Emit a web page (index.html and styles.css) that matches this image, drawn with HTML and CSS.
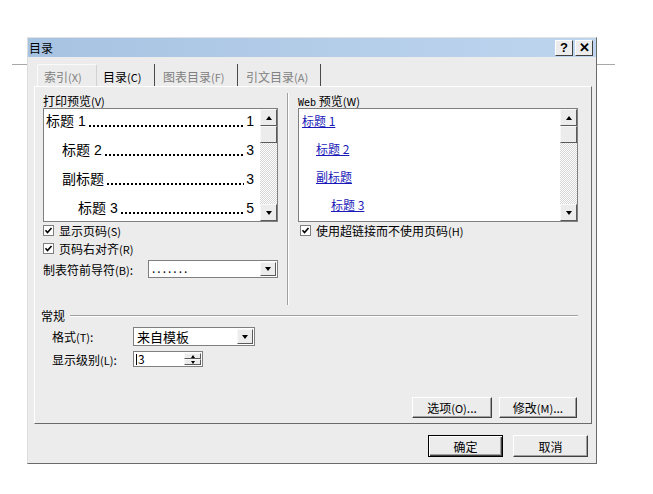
FILE: index.html
```html
<!DOCTYPE html>
<html lang="zh-CN">
<head>
  <meta charset="UTF-8">
  <title>目录</title>
  <link rel="stylesheet" href="styles.css">
</head>
<body>
  <div class="backline"></div>

  <div class="dialog">
    <div class="titlebar">
      <span class="title">目录</span>
      <div class="title-btns">
        <span class="tbtn">?</span>
        <span class="tbtn">✕</span>
      </div>
    </div>

    <div class="tabs">
      <div class="tab first">索引<span class="key">(X)</span></div>
      <div class="tab active">目录<span class="key">(C)</span></div>
      <div class="tab wide">图表目录<span class="key">(F)</span></div>
      <div class="tab wide">引文目录<span class="key">(A)</span></div>
    </div>

    <div class="panel">
      <div class="top">
        <div class="col">
          <div class="label">打印预览<span class="key">(V)</span></div>
          <div class="listbox">
            <div class="list-body toc">
              <div class="toc-row lvl1"><span>标题 1</span><span class="dots"></span><span>1</span></div>
              <div class="toc-row lvl2"><span>标题 2</span><span class="dots"></span><span>3</span></div>
              <div class="toc-row lvl2"><span>副标题</span><span class="dots"></span><span>3</span></div>
              <div class="toc-row lvl3"><span>标题 3</span><span class="dots"></span><span>5</span></div>
            </div>
            <div class="scroll">
              <div class="sbtn"><i class="tri up"></i></div>
              <div class="sbtn"></div>
              <div class="sb-fill"></div>
              <div class="sbtn"><i class="tri"></i></div>
            </div>
          </div>
          <div class="check-row first">
            <svg class="check" viewBox="0 0 11 11"><rect x="0.5" y="0.5" width="10" height="10" fill="#fff" stroke="#808080"/><path d="M2.5 5.3 L4.5 7.5 L8.5 3" stroke="#000" stroke-width="1.6" fill="none"/></svg>
            <span>显示页码<span class="key">(S)</span></span>
          </div>
          <div class="check-row">
            <svg class="check" viewBox="0 0 11 11"><rect x="0.5" y="0.5" width="10" height="10" fill="#fff" stroke="#808080"/><path d="M2.5 5.3 L4.5 7.5 L8.5 3" stroke="#000" stroke-width="1.6" fill="none"/></svg>
            <span>页码右对齐<span class="key">(R)</span></span>
          </div>
          <div class="leader-row">
            <span>制表符前导符<span class="key">(B)</span>:</span>
            <div class="select leader">
              <span class="select-val dotted">.......</span>
              <span class="drop"><i class="tri"></i></span>
            </div>
          </div>
        </div>

        <div class="divider"></div>

        <div class="col">
          <div class="label"><span class="latin">Web</span> 预览<span class="key">(W)</span></div>
          <div class="listbox">
            <div class="list-body links">
              <div class="link-row lvl1"><a>标题 1</a></div>
              <div class="link-row lvl2"><a>标题 2</a></div>
              <div class="link-row lvl2"><a>副标题</a></div>
              <div class="link-row lvl3"><a>标题 3</a></div>
            </div>
            <div class="scroll">
              <div class="sbtn"><i class="tri up"></i></div>
              <div class="sbtn"></div>
              <div class="sb-fill"></div>
              <div class="sbtn"><i class="tri"></i></div>
            </div>
          </div>
          <div class="check-row first right">
            <svg class="check" viewBox="0 0 11 11"><rect x="0.5" y="0.5" width="10" height="10" fill="#fff" stroke="#808080"/><path d="M2.5 5.3 L4.5 7.5 L8.5 3" stroke="#000" stroke-width="1.6" fill="none"/></svg>
            <span>使用超链接而不使用页码<span class="key">(H)</span></span>
          </div>
        </div>
      </div>

      <div class="group-head">
        <span>常规</span>
        <span class="group-line"></span>
      </div>
      <div class="form-row format">
        <span class="form-label">格式<span class="key">(T)</span>:</span>
        <div class="select fmt">
          <span class="select-val">来自模板</span>
          <span class="drop"><i class="tri"></i></span>
        </div>
      </div>
      <div class="form-row level">
        <span class="form-label">显示级别<span class="key">(L)</span>:</span>
        <div class="spin">
          <span class="spin-val"><span class="caret"></span>3</span>
          <span class="spin-btns">
            <span class="spin-btn"><i class="tri tiny up"></i></span>
            <span class="spin-btn"><i class="tri tiny"></i></span>
          </span>
        </div>
      </div>

      <div class="btn-row">
        <button class="btn opt">选项<span class="key">(O)</span>...</button>
        <button class="btn mod">修改<span class="key">(M)</span>...</button>
      </div>
    </div>

    <div class="dlg-btns">
      <button class="btn big default">确定</button>
      <button class="btn big">取消</button>
    </div>
  </div>
</body>
</html>
```

FILE: styles.css
```css
* {
  box-sizing: border-box;
}
body {
  margin: 0;
  background: #fff;
  font-family: "Noto Sans CJK SC", "Noto Sans", sans-serif;
  font-size: 12px;
  color: #000;
  position: relative;
  height: 494px;
  overflow: hidden;
}
.backline {
  position: absolute;
  left: 12px;
  top: 64px;
  width: 603px;
  height: 1px;
  background: #a8a8a8;
}
.dialog {
  position: relative;
  margin: 37px 0 0 27px;
  width: 570px;
  height: 427px;
  background: #ececec;
  border: 1px solid;
  border-color: #e2e2e2 #6a6a6a #6a6a6a #dcdcdc;
}
.titlebar {
  height: 19px;
  display: flex;
  align-items: center;
  justify-content: space-between;
  padding: 0 3px 0 1px;
  background: linear-gradient(to right, #a7c3e2, #bed5ee);
}
.title {
  line-height: 19px;
}
.title-btns {
  display: flex;
  gap: 2px;
}
.tbtn {
  width: 18px;
  height: 16px;
  background: #ececec;
  border: 1px solid;
  border-color: #fff #404040 #404040 #fff;
  font: bold 13px "Liberation Sans", sans-serif;
  display: flex;
  align-items: center;
  justify-content: center;
}
.key {
  font-size: 11px;
}
.latin {
  font: 10px "DejaVu Sans Mono", monospace;
}

/* tabs */
.tabs {
  display: flex;
  margin: 7px 0 0 9px;
  height: 22px;
}
.tab {
  height: 22px;
  padding: 4px 0 0 6px;
  line-height: 18px;
  color: #808080;
  width: 83px;
  border-right: 1px solid #4a4a4a;
}
.tab.first {
  width: 60px;
  border: 1px solid #fafafa;
  border-bottom: none;
  border-right-color: #d2d2d2;
  border-radius: 2px 2px 0 0;
  padding-top: 3px;
}
.tab.active {
  width: 58px;
  color: #000;
}
.tab.wide {
  padding-left: 8px;
}

/* main panel */
.panel {
  margin: 0 4px 0 6px;
  height: 338px;
  border: 1px solid;
  border-color: #fff #6a6a6a #6a6a6a #fff;
  padding: 6px 13px 5px 8px;
  display: flex;
  flex-direction: column;
}
.top {
  display: grid;
  grid-template-columns: 235px 20px 280px;
  height: 212px;
}
.divider {
  justify-self: center;
  width: 2px;
  border-left: 1px solid #a0a0a0;
  border-right: 1px solid #fff;
}
.col {
  padding-top: 1px;
  display: flex;
  flex-direction: column;
}
.label {
  height: 14px;
  line-height: 13px;
}
.listbox {
  height: 114px;
  border: 1px solid #7f7f7f;
  background: #fff;
  display: flex;
}
.list-body {
  flex: 1;
  overflow: hidden;
  min-width: 0;
}
.scroll {
  width: 17px;
  display: flex;
  flex-direction: column;
  background: repeating-conic-gradient(#fff 0 25%, #d6d6d6 0 50%) 0 0 / 2px 2px;
}
.sbtn {
  height: 17px;
  background: #ececec;
  border: 1px solid;
  border-color: #f8f8f8 #5a5a5a #5a5a5a #f8f8f8;
  display: flex;
  align-items: center;
  justify-content: center;
}
.sb-fill {
  flex: 1;
}
.tri {
  display: block;
  width: 0;
  height: 0;
  border-left: 3.5px solid transparent;
  border-right: 3.5px solid transparent;
  border-top: 4px solid #000;
}
.tri.up {
  border-top: none;
  border-bottom: 4px solid #000;
}
.tri.tiny {
  border-left-width: 2.5px;
  border-right-width: 2.5px;
  border-top-width: 3px;
}
.tri.tiny.up {
  border-top-width: 0;
  border-bottom-width: 3px;
}

/* print preview */
.toc {
  font: 14px "Liberation Sans", "Noto Sans CJK SC", sans-serif;
  padding: 0 6px 0 2px;
  margin-top: -2px;
}
.toc-row {
  display: flex;
  white-space: nowrap;
  line-height: 29px;
}
.toc-row .dots {
  flex: 1;
  margin: 0 2px 0 2px;
  background: radial-gradient(circle, #000 0.75px, transparent 1.1px) 0 17px / 4px 4px repeat-x;
}
.lvl2 {
  padding-left: 16px;
}
.lvl3 {
  padding-left: 32px;
}

/* web preview */
.links {
  padding-left: 3px;
  margin-top: -2px;
}
.link-row {
  line-height: 28px;
}
.link-row a {
  color: #1a1ab8;
  text-decoration: underline;
}
.links .lvl2 {
  padding-left: 14px;
}
.links .lvl3 {
  padding-left: 29px;
}

/* checkboxes */
.check-row {
  display: flex;
  align-items: center;
  gap: 5px;
  height: 13px;
  margin-top: 5px;
  line-height: 13px;
}
.check-row.first {
  margin-top: 2px;
}
.check-row.right {
  padding-left: 2px;
}
.check {
  width: 11px;
  height: 11px;
  flex: none;
}
.leader-row {
  display: flex;
  align-items: center;
  justify-content: space-between;
  height: 18px;
  margin-top: 5px;
}

/* selects and spinner */
.select {
  display: flex;
  align-items: stretch;
  border: 1px solid #7f7f7f;
  background: #fff;
  padding: 1px;
}
.select.leader {
  width: 130px;
  height: 18px;
}
.select.fmt {
  width: 122px;
  height: 19px;
}
.select-val {
  flex: 1;
  padding-left: 2px;
  line-height: 15px;
  font-size: 13px;
}
.select-val.dotted {
  font-size: 12px;
  letter-spacing: 2px;
  line-height: 12px;
}
.drop {
  width: 16px;
  background: #ececec;
  border: 1px solid;
  border-color: #f8f8f8 #5a5a5a #5a5a5a #f8f8f8;
  display: flex;
  align-items: center;
  justify-content: center;
}

/* general group */
.group-head {
  display: flex;
  align-items: center;
  gap: 5px;
  height: 12px;
  margin: 5px 0 0 -2px;
  line-height: 12px;
}
.group-line {
  flex: 1;
  height: 2px;
  border-top: 1px solid #a0a0a0;
  border-bottom: 1px solid #fff;
}
.form-row {
  display: flex;
  align-items: center;
  padding-left: 9px;
  margin-top: 5px;
}
.form-row.format {
  height: 19px;
}
.form-row.level {
  height: 16px;
}
.form-label {
  width: 81px;
}
.spin {
  display: flex;
  width: 70px;
  height: 16px;
  border: 1px solid #7f7f7f;
  background: #fff;
  padding: 1px;
}
.spin-val {
  flex: 1;
  display: flex;
  align-items: center;
  line-height: 12px;
  padding-left: 1px;
}
.caret {
  width: 1px;
  height: 11px;
  background: #000;
  margin-right: 1px;
}
.spin-btns {
  width: 17px;
  display: flex;
  flex-direction: column;
}
.spin-btn {
  flex: 1;
  background: #ececec;
  border: 1px solid;
  border-color: #f8f8f8 #5a5a5a #5a5a5a #f8f8f8;
  display: flex;
  align-items: center;
  justify-content: center;
}

/* buttons */
.btn-row {
  display: flex;
  justify-content: flex-end;
  gap: 7px;
  margin-top: 30px;
  margin-right: 1px;
}
.btn {
  height: 21px;
  padding: 0;
  font-family: inherit;
  font-size: 12px;
  color: #000;
  background: #ececec;
  border: 1px solid;
  border-color: #fff #404040 #404040 #fff;
  box-shadow: inset -1px -1px #a0a0a0;
}
.btn.opt {
  width: 80px;
}
.btn.mod {
  width: 78px;
}
.dlg-btns {
  display: flex;
  justify-content: flex-end;
  gap: 10px;
  margin: 11px 8px 0 0;
}
.btn.big {
  width: 75px;
  height: 22px;
}
.btn.default {
  border-color: #000;
  box-shadow: inset 1px 1px #fff, inset -1px -1px #404040, inset -2px -2px #a0a0a0;
}
```
